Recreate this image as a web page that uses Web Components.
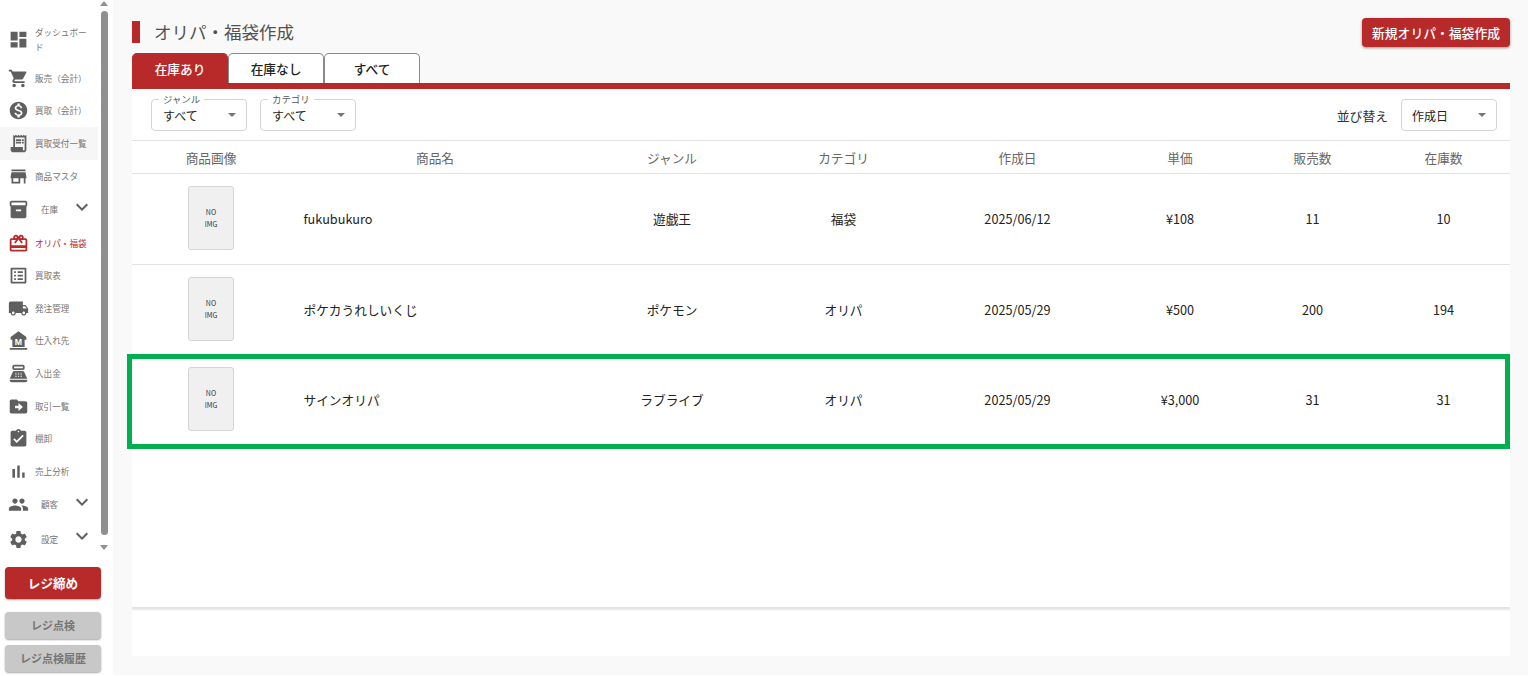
<!DOCTYPE html>
<html lang="ja">
<head>
<meta charset="utf-8">
<title>オリパ・福袋作成</title>
<style>
    html, body { margin: 0; height: 100%; background: #fff; overflow: hidden; }
    body { font-family: "Noto Sans CJK JP", "Noto Sans", sans-serif; }
</style>
</head>
<body>
<app-shell>
    <side-nav slot="side"></side-nav>
    <page-head slot="main" title-text="オリパ・福袋作成" action="新規オリパ・福袋作成"></page-head>
    <stock-tabs slot="main" active="0"></stock-tabs>
    <stock-panel slot="main"></stock-panel>
</app-shell>
<script>
const RED = '#b82a2a';

const ICONS = {
    dashboard: 'M3 13h8V3H3v10zm0 8h8v-6H3v6zm10 0h8V11h-8v10zm0-18v6h8V3h-8z',
    cart: 'M7 18c-1.1 0-1.99.9-1.99 2S5.9 22 7 22s2-.9 2-2-.9-2-2-2zM1 2v2h2l3.6 7.59-1.35 2.45c-.16.28-.25.61-.25.96 0 1.1.9 2 2 2h12v-2H7.42c-.14 0-.25-.11-.25-.25l.03-.12.9-1.63h7.45c.75 0 1.41-.41 1.75-1.03l3.58-6.49c.08-.14.12-.31.12-.48 0-.55-.45-1-1-1H5.21l-.94-2H1zm16 16c-1.1 0-1.99.9-1.99 2s.89 2 1.99 2 2-.9 2-2-.9-2-2-2z',
    money: 'M12 2C6.48 2 2 6.48 2 12s4.48 10 10 10 10-4.48 10-10S17.52 2 12 2zm1.41 16.09V20h-2.67v-1.93c-1.71-.36-3.16-1.46-3.27-3.4h1.96c.1 1.05.82 1.87 2.65 1.87 1.96 0 2.4-.98 2.4-1.59 0-.83-.44-1.61-2.67-2.14-2.48-.6-4.18-1.62-4.18-3.67 0-1.72 1.39-2.84 3.11-3.21V4h2.67v1.95c1.86.45 2.79 1.86 2.87 3.39H14.3c-.05-1.11-.64-1.87-2.22-1.87-1.5 0-2.4.68-2.4 1.64 0 .84.65 1.39 2.67 1.91s4.18 1.39 4.18 3.91c-.01 1.83-1.38 2.83-3.12 3.16z',
    receipt: 'M19.5 3.5 18 2l-1.5 1.5L15 2l-1.5 1.5L12 2l-1.5 1.5L9 2 7.5 3.5 6 2v14H3v3c0 1.66 1.34 3 3 3h12c1.66 0 3-1.34 3-3V2l-1.5 1.5zM19 19c0 .55-.45 1-1 1s-1-.45-1-1v-3H8V5h11v14zM9 7h6v2H9zm7 0h2v2h-2zM9 10h6v2H9zm7 0h2v2h-2z',
    store: 'M20 4H4v2h16V4zm1 10v-2l-1-5H4l-1 5v2h1v6h10v-6h4v6h2v-6h1zm-9 4H6v-4h6v4z',
    archive: 'M20 2H4c-1 0-2 .9-2 2v3.01c0 .72.43 1.34 1 1.69V20c0 1.1 1.1 2 2 2h14c.9 0 2-.9 2-2V8.7c.57-.35 1-.97 1-1.69V4c0-1.1-1-2-2-2zm-5 12H9v-2h6v2zm5-7H4V4h16v3z',
    gift: 'M20 6h-2.18c.11-.31.18-.65.18-1 0-1.66-1.34-3-3-3-1.05 0-1.96.54-2.5 1.35l-.5.67-.5-.68C10.96 2.54 10.05 2 9 2 7.34 2 6 3.34 6 5c0 .35.07.69.18 1H4c-1.11 0-1.99.89-1.99 2L2 19c0 1.11.89 2 2 2h16c1.11 0 2-.89 2-2V8c0-1.11-.89-2-2-2zm-5-2c.55 0 1 .45 1 1s-.45 1-1 1-1-.45-1-1 .45-1 1-1zM9 4c.55 0 1 .45 1 1s-.45 1-1 1-1-.45-1-1 .45-1 1-1zm11 15H4v-2h16v2zm0-5H4V8h5.08L7 10.83 8.62 12 12 7.4l3.38 4.6L17 10.83 14.92 8H20v6z',
    list: 'M19 5v14H5V5h14m1.1-2H3.9c-.5 0-.9.4-.9.9v16.2c0 .4.4.9.9.9h16.2c.4 0 .9-.5.9-.9V3.9c0-.5-.5-.9-.9-.9zM11 7h6v2h-6V7zm0 4h6v2h-6v-2zm0 4h6v2h-6zM7 7h2v2H7zm0 4h2v2H7zm0 4h2v2H7z',
    truck: 'M20 8h-3V4H3c-1.1 0-2 .9-2 2v11h2c0 1.66 1.34 3 3 3s3-1.34 3-3h6c0 1.66 1.34 3 3 3s3-1.34 3-3h2v-5l-3-4zM6 18.5c-.83 0-1.5-.67-1.5-1.5s.67-1.5 1.5-1.5 1.5.67 1.5 1.5-.67 1.5-1.5 1.5zm13.5-9l1.96 2.5H17V9.5h2.5zm-1.5 9c-.83 0-1.5-.67-1.5-1.5s.67-1.5 1.5-1.5 1.5.67 1.5 1.5-.67 1.5-1.5 1.5z',
    bank: 'M12 1.5 3 8v3h2v8.5h14V11h2V8zM2 20.5h20v2H2z',
    register: 'M17 2H7c-1.1 0-2 .9-2 2v2c0 1.1.9 2 2 2h10c1.1 0 2-.9 2-2V4c0-1.1-.9-2-2-2zm0 4H7V4h10v2zm3 16H4c-1.1 0-2-.9-2-2v-1h20v1c0 1.1-.9 2-2 2zm-1.47-11.81C18.21 9.47 17.49 9 16.7 9H7.3c-.79 0-1.51.47-1.83 1.19L2 18h20l-3.47-7.81zM9.5 16h-1c-.28 0-.5-.22-.5-.5s.22-.5.5-.5h1c.28 0 .5.22.5.5s-.22.5-.5.5zm0-2h-1c-.28 0-.5-.22-.5-.5s.22-.5.5-.5h1c.28 0 .5.22.5.5s-.22.5-.5.5zm0-2h-1c-.28 0-.5-.22-.5-.5s.22-.5.5-.5h1c.28 0 .5.22.5.5s-.22.5-.5.5zm3 4h-1c-.28 0-.5-.22-.5-.5s.22-.5.5-.5h1c.28 0 .5.22.5.5s-.22.5-.5.5zm0-2h-1c-.28 0-.5-.22-.5-.5s.22-.5.5-.5h1c.28 0 .5.22.5.5s-.22.5-.5.5zm0-2h-1c-.28 0-.5-.22-.5-.5s.22-.5.5-.5h1c.28 0 .5.22.5.5s-.22.5-.5.5zm3 4h-1c-.28 0-.5-.22-.5-.5s.22-.5.5-.5h1c.28 0 .5.22.5.5s-.22.5-.5.5zm0-2h-1c-.28 0-.5-.22-.5-.5s.22-.5.5-.5h1c.28 0 .5.22.5.5s-.22.5-.5.5zm0-2h-1c-.28 0-.5-.22-.5-.5s.22-.5.5-.5h1c.28 0 .5.22.5.5s-.22.5-.5.5z',
    folder: 'M20 6h-8l-2-2H4c-1.1 0-2 .9-2 2v12c0 1.1.9 2 2 2h16c1.1 0 2-.9 2-2V8c0-1.1-.9-2-2-2zm-8 11v-3H8v-3h4V8l5 4.5L12 17z',
    check: 'M19 3h-4.18C14.4 1.84 13.3 1 12 1c-1.3 0-2.4.84-2.82 2H5c-1.1 0-2 .9-2 2v14c0 1.1.9 2 2 2h14c1.1 0 2-.9 2-2V5c0-1.1-.9-2-2-2zm-7 0c.55 0 1 .45 1 1s-.45 1-1 1-1-.45-1-1 .45-1 1-1zm-2 14l-4-4 1.41-1.41L10 14.17l6.59-6.59L18 9l-8 8z',
    chart: 'M5 9.2h3V19H5zM10.6 5h2.8v14h-2.8zm5.6 8H19v6h-2.8z',
    people: 'M16 11c1.66 0 2.99-1.34 2.99-3S17.66 5 16 5c-1.66 0-3 1.34-3 3s1.34 3 3 3zm-8 0c1.66 0 2.99-1.34 2.99-3S9.66 5 8 5C6.34 5 5 6.34 5 8s1.34 3 3 3zm0 2c-2.33 0-7 1.17-7 3.5V19h14v-2.5c0-2.33-4.67-3.5-7-3.5zm8 0c-.29 0-.62.02-.97.05 1.16.84 1.97 1.97 1.97 3.45V19h6v-2.5c0-2.33-4.67-3.5-7-3.5z',
    settings: 'M19.14 12.94c.04-.3.06-.61.06-.94 0-.32-.02-.64-.07-.94l2.03-1.58c.18-.14.23-.41.12-.61l-1.92-3.32c-.12-.22-.37-.29-.59-.22l-2.39.96c-.5-.38-1.03-.7-1.62-.94l-.36-2.54c-.04-.24-.24-.41-.48-.41h-3.84c-.24 0-.43.17-.47.41l-.36 2.54c-.59.24-1.13.57-1.62.94l-2.39-.96c-.22-.08-.47 0-.59.22L2.74 8.87c-.12.21-.08.47.12.61l2.03 1.58c-.05.3-.09.63-.09.94s.02.64.07.94l-2.03 1.58c-.18.14-.23.41-.12.61l1.92 3.32c.12.22.37.29.59.22l2.39-.96c.5.38 1.03.7 1.62.94l.36 2.54c.05.24.24.41.48.41h3.84c.24 0 .44-.17.47-.41l.36-2.54c.59-.24 1.13-.56 1.62-.94l2.39.96c.22.08.47 0 .59-.22l1.92-3.32c.12-.22.07-.47-.12-.61l-2.01-1.58zM12 15.6c-1.98 0-3.6-1.62-3.6-3.6s1.62-3.6 3.6-3.6 3.6 1.62 3.6 3.6-1.62 3.6-3.6 3.6z'
};

class AppShell extends HTMLElement {
    constructor() {
        super();
        this.attachShadow({ mode: 'open' });
        this.shadowRoot.innerHTML = `
            <style>
                :host { display: flex; width: 1528px; height: 675px; background: #f9f9f9; }
                .side { width: 113px; flex: none; background: #fff; }
                .main { flex: 1; min-width: 0; padding: 18px 18px 19px 19px; display: flex; flex-direction: column; box-sizing: border-box; }
            </style>
            <div class="side"><slot name="side"></slot></div>
            <div class="main"><slot name="main"></slot></div>
        `;
    }
}

class NavItem extends HTMLElement {
    constructor() {
        super();
        this.attachShadow({ mode: 'open' });
    }

    connectedCallback() {
        const icon = this.getAttribute('icon');
        const sub = this.hasAttribute('expand');
        const extra = icon === 'bank'
            ? '<text x="12" y="17.5" text-anchor="middle" font-size="10" font-weight="700" font-family="Liberation Sans, sans-serif" fill="#fff">M</text>'
            : '';
        this.shadowRoot.innerHTML = `
            <style>
                :host { display: flex; align-items: center; width: 98px; height: ${this.getAttribute('h') || 32.6}px; color: #757575; }
                :host([active]) { color: ${RED}; }
                :host([hover]) { background: #f6f6f6; }
                svg.icon { width: 21px; height: 21px; margin-left: 8px; flex: none; fill: #5f5f5f; }
                :host([active]) svg.icon { fill: ${RED}; }
                .label { font-size: 8.6px; line-height: 15px; margin-left: 6px; width: 54px; }
                :host([expand]) .label { margin-left: 12px; width: auto; flex: 1; }
                .more { width: 24px; height: 24px; fill: #5f5f5f; flex: none; margin: -6px 4px 0 0; }
            </style>
            <svg class="icon" viewBox="0 0 24 24"><path d="${ICONS[icon]}"/>${extra}</svg>
            <span class="label"><slot></slot></span>
            ${sub ? '<svg class="more" viewBox="0 0 24 24"><path d="M16.59 8.59 12 13.17 7.41 8.59 6 10l6 6 6-6z"/></svg>' : ''}
        `;
    }
}

class RegButton extends HTMLElement {
    constructor() {
        super();
        this.attachShadow({ mode: 'open' });
        this.shadowRoot.innerHTML = `
            <style>
                :host { display: flex; align-items: center; justify-content: center; width: 96px; height: 26.5px; box-sizing: border-box;
                    border-radius: 4px; background: #c8c8c8; color: #757575; font-size: 11px; font-weight: 700; padding-bottom: 1px;
                    box-shadow: 0 1px 2px rgba(0,0,0,.35); }
                :host([primary]) { height: 32px; background: ${RED}; color: #fff; font-size: 12.6px; }
            </style>
            <slot></slot>
        `;
    }
}

class SideNav extends HTMLElement {
    constructor() {
        super();
        this.attachShadow({ mode: 'open' });
        const items = [
            ['dashboard', 'ダッシュボード', 'h="39" style="margin-bottom:3px"'],
            ['cart', '販売（会計）', ''],
            ['money', '買取（会計）', ''],
            ['receipt', '買取受付一覧', 'hover'],
            ['store', '商品マスタ', ''],
            ['archive', '在庫', 'expand h="34.5"'],
            ['gift', 'オリパ・福袋', 'active'],
            ['list', '買取表', ''],
            ['truck', '発注管理', ''],
            ['bank', '仕入れ先', ''],
            ['register', '入出金', ''],
            ['folder', '取引一覧', ''],
            ['check', '棚卸', ''],
            ['chart', '売上分析', ''],
            ['people', '顧客', 'expand h="34.5"'],
            ['settings', '設定', 'expand h="34.5"']
        ];
        const rows = items.map(([icon, text, attrs]) => `<nav-item icon="${icon}" ${attrs}>${text}</nav-item>`).join('');
        this.shadowRoot.innerHTML = `
            <style>
                :host { display: block; height: 100%; }
                .scroll { display: flex; height: 553px; }
                .items { width: 100px; padding-top: 20px; box-sizing: border-box; }
                .bar { width: 8px; display: flex; flex-direction: column; align-items: center; }
                .up, .down { width: 0; height: 0; border-left: 4px solid transparent; border-right: 4px solid transparent; }
                .up { border-bottom: 5px solid #8f8f8f; margin-top: 1px; }
                .down { border-top: 5px solid #8f8f8f; margin-top: 10px; }
                .thumb { width: 7px; height: 524px; margin-top: 5px; border-radius: 4px; background: #8f8f8f; }
                .btns { display: flex; flex-direction: column; padding: 14px 0 0 5px; }
                .btns reg-button + reg-button { margin-top: 6.5px; }
                .btns reg-button[primary] { margin-bottom: 6.5px; }
            </style>
            <div class="scroll">
                <div class="items">${rows}</div>
                <div class="bar"><div class="up"></div><div class="thumb"></div><div class="down"></div></div>
            </div>
            <div class="btns">
                <reg-button primary>レジ締め</reg-button>
                <reg-button>レジ点検</reg-button>
                <reg-button>レジ点検履歴</reg-button>
            </div>
        `;
    }
}

class PageHead extends HTMLElement {
    constructor() {
        super();
        this.attachShadow({ mode: 'open' });
    }

    connectedCallback() {
        this.shadowRoot.innerHTML = `
            <style>
                :host { display: flex; align-items: flex-start; justify-content: space-between; height: 35px; flex: none; }
                .title { display: flex; align-items: center; margin-top: 3px; font-size: 17.5px; line-height: 22px; color: #525252; }
                .title::before { content: ''; width: 8px; height: 22px; background: ${RED}; margin-right: 14px; }
                button { height: 29px; width: 148px; padding: 0; border: 0; border-radius: 4px; background: ${RED}; color: #fff;
                    font: 500 12.8px "Noto Sans CJK JP", sans-serif; box-shadow: 0 1px 3px rgba(0,0,0,.4); }
            </style>
            <div class="title">${this.getAttribute('title-text')}</div>
            <button>${this.getAttribute('action')}</button>
        `;
    }
}

class StockTabs extends HTMLElement {
    constructor() {
        super();
        this.attachShadow({ mode: 'open' });
    }

    connectedCallback() {
        const active = parseInt(this.getAttribute('active'));
        const tabs = ['在庫あり', '在庫なし', 'すべて'].map((t, i) =>
            `<div class="tab ${i === active ? 'on' : ''}">${t}</div>`).join('');
        this.shadowRoot.innerHTML = `
            <style>
                :host { display: block; flex: none; border-bottom: 6px solid ${RED}; }
                .tabs { display: flex; height: 30px; }
                .tab { width: 96px; box-sizing: border-box; display: flex; align-items: center; justify-content: center;
                    border: 1px solid #8a8a8a; border-bottom: 0; border-radius: 5px 5px 0 0; background: #fff;
                    font-size: 12.7px; font-weight: 500; color: #222; }
                .on { background: ${RED}; border-color: ${RED}; color: #fff; }
            </style>
            <div class="tabs">${tabs}</div>
        `;
    }
}

class FilterSelect extends HTMLElement {
    constructor() {
        super();
        this.attachShadow({ mode: 'open' });
    }

    connectedCallback() {
        const label = this.getAttribute('label');
        this.shadowRoot.innerHTML = `
            <style>
                :host { display: block; position: relative; width: 96px; height: 32px; box-sizing: border-box;
                    border: 1px solid #d4d4d4; border-radius: 4px; background: #fff; }
                .box { display: flex; align-items: center; justify-content: space-between; height: 100%; box-sizing: border-box;
                    padding: 0 11px 0 11px; font-size: 12px; color: #222; }
                :host(.plain) .box { padding-left: 10px; }
                .caret { width: 0; height: 0; border-left: 4.5px solid transparent; border-right: 4.5px solid transparent; border-top: 4px solid #757575; margin-right: -1px; }
                .legend { position: absolute; top: -7px; left: 7px; padding: 0 4px; background: #fff; font-size: 9.4px; line-height: 12px; color: #555; }
            </style>
            ${label ? `<span class="legend">${label}</span>` : ''}
            <div class="box"><span><slot></slot></span><i class="caret"></i></div>
        `;
    }
}

class StockRow extends HTMLElement {
    constructor() {
        super();
        this.attachShadow({ mode: 'open' });
    }

    connectedCallback() {
        const cells = this.getAttribute('cells').split('|');
        this.shadowRoot.innerHTML = `
            <style>
                :host { display: grid; grid-template-columns: var(--cols); height: 90.5px; box-sizing: border-box; position: relative;
                    align-items: center; font-size: 12.7px; color: #222; text-align: center; border-bottom: 1px solid #e2e2e2; }
                :host([marked]) { border-bottom-color: transparent; }
                :host([marked])::after { content: ''; position: absolute; left: -5px; right: 0; top: -1px; height: 95px; box-sizing: border-box;
                    border: 5px solid #00b050; }
                .thumb { width: 46px; height: 64px; margin: -1px auto 0; box-sizing: border-box; border: 1px solid #d5d5d5; border-radius: 3px;
                    background: #f0f0f0; display: flex; flex-direction: column; align-items: center; justify-content: center;
                    font-size: 7px; line-height: 12px; color: #333; }
                .name { text-align: left; padding-left: 13.5px; }
            </style>
            <div class="thumb"><span>NO</span><span>IMG</span></div>
            <div class="name">${cells[0]}</div>
            ${cells.slice(1).map(c => `<div>${c}</div>`).join('')}
        `;
    }
}

class StockPanel extends HTMLElement {
    constructor() {
        super();
        this.attachShadow({ mode: 'open' });
        const heads = ['商品画像', '商品名', 'ジャンル', 'カテゴリ', '作成日', '単価', '販売数', '在庫数'];
        this.shadowRoot.innerHTML = `
            <style>
                :host { display: flex; flex-direction: column; flex: 1; min-height: 0; background: #fff;
                    --cols: 158px 290px 184px 159px 189px 136px 129px 133px; }
                .tools { display: flex; align-items: center; height: 52px; box-sizing: border-box; padding: 1px 13px 0 19px; gap: 13px; border-bottom: 1px solid #e2e2e2; flex: none; }
                .sort { margin-left: auto; font-size: 12.8px; color: #333; }
                .heads { display: grid; grid-template-columns: var(--cols); height: 33px; box-sizing: border-box; align-items: center; flex: none;
                    border-bottom: 1px solid #e2e2e2; text-align: center; font-size: 12.7px; color: #666; }
                .rows { height: 433px; flex: none; }
                .edge { height: 4px; flex: none; background: linear-gradient(#e2e2e2, #e6e6e6 50%, #fff); }
            </style>
            <div class="tools">
                <filter-select label="ジャンル">すべて</filter-select>
                <filter-select label="カテゴリ">すべて</filter-select>
                <span class="sort">並び替え</span>
                <filter-select class="plain">作成日</filter-select>
            </div>
            <div class="heads">${heads.map(h => `<div>${h}</div>`).join('')}</div>
            <div class="rows">
                <stock-row cells="fukubukuro|遊戯王|福袋|2025/06/12|¥108|11|10"></stock-row>
                <stock-row cells="ポケカうれしいくじ|ポケモン|オリパ|2025/05/29|¥500|200|194"></stock-row>
                <stock-row marked cells="サインオリパ|ラブライブ|オリパ|2025/05/29|¥3,000|31|31"></stock-row>
            </div>
            <div class="edge"></div>
        `;
    }
}

customElements.define('nav-item', NavItem);
customElements.define('reg-button', RegButton);
customElements.define('side-nav', SideNav);
customElements.define('page-head', PageHead);
customElements.define('stock-tabs', StockTabs);
customElements.define('filter-select', FilterSelect);
customElements.define('stock-row', StockRow);
customElements.define('stock-panel', StockPanel);
customElements.define('app-shell', AppShell);
</script>
</body>
</html>
